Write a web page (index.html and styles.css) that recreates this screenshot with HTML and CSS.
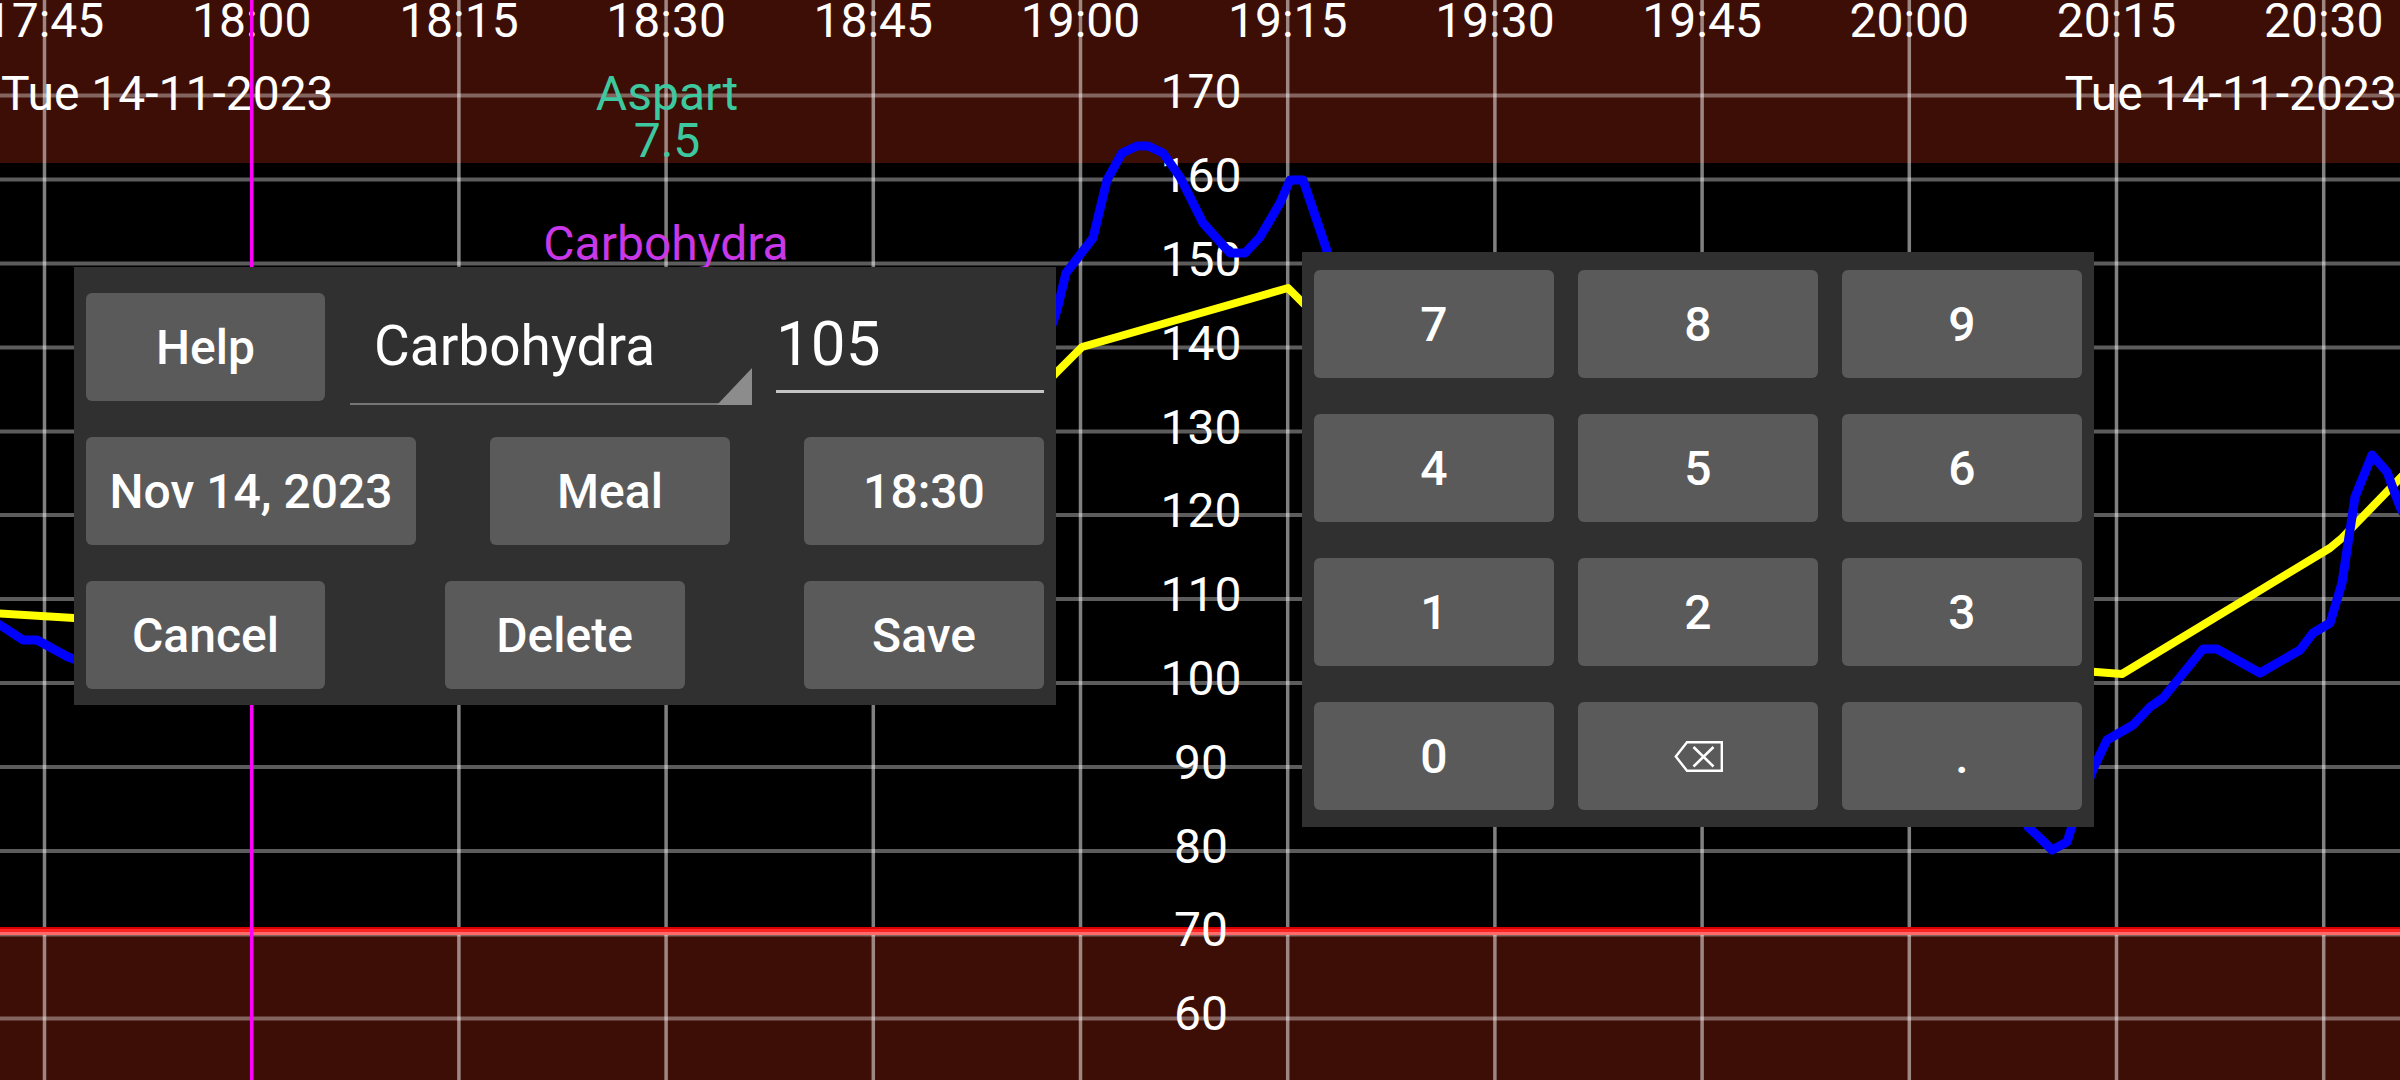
FILE: index.html
```html
<!DOCTYPE html>
<html>
<head>
<meta charset="utf-8">
<title>Glucose chart – entry</title>
<link rel="stylesheet" href="styles.css">
</head>
<body>
<div class="screen">
  <svg class="chart" width="2400" height="1080" viewBox="0 0 2400 1080">
    <rect class="band" x="0" y="0" width="2400" height="163"/>
    <rect class="band" x="0" y="935" width="2400" height="145"/>
    <g class="hgrid">
      <line x1="0" x2="2400" y1="95.5" y2="95.5"/>
      <line x1="0" x2="2400" y1="179.5" y2="179.5"/>
      <line x1="0" x2="2400" y1="263.5" y2="263.5"/>
      <line x1="0" x2="2400" y1="347.5" y2="347.5"/>
      <line x1="0" x2="2400" y1="431.5" y2="431.5"/>
      <line x1="0" x2="2400" y1="515" y2="515"/>
      <line x1="0" x2="2400" y1="599" y2="599"/>
      <line x1="0" x2="2400" y1="683" y2="683"/>
      <line x1="0" x2="2400" y1="767" y2="767"/>
      <line x1="0" x2="2400" y1="851" y2="851"/>
      <line x1="0" x2="2400" y1="934.5" y2="934.5"/>
      <line x1="0" x2="2400" y1="1018.5" y2="1018.5"/>
    </g>
    <g class="vgrid">
      <line x1="44.5" x2="44.5" y1="0" y2="1080"/>
      <line x1="458.9" x2="458.9" y1="0" y2="1080"/>
      <line x1="666.1" x2="666.1" y1="0" y2="1080"/>
      <line x1="873.3" x2="873.3" y1="0" y2="1080"/>
      <line x1="1080.5" x2="1080.5" y1="0" y2="1080"/>
      <line x1="1287.7" x2="1287.7" y1="0" y2="1080"/>
      <line x1="1494.9" x2="1494.9" y1="0" y2="1080"/>
      <line x1="1702.1" x2="1702.1" y1="0" y2="1080"/>
      <line x1="1909.3" x2="1909.3" y1="0" y2="1080"/>
      <line x1="2116.5" x2="2116.5" y1="0" y2="1080"/>
      <line x1="2323.7" x2="2323.7" y1="0" y2="1080"/>
    </g>
    <rect class="low1" x="0" y="927" width="2400" height="2"/>
    <rect class="low2" x="0" y="929" width="2400" height="3"/>
    <rect class="low3" x="0" y="932" width="2400" height="3"/>

    <g class="label time">
      <text x="44.5" y="37">17:45</text>
      <text x="251.7" y="37">18:00</text>
      <text x="458.9" y="37">18:15</text>
      <text x="666.1" y="37">18:30</text>
      <text x="873.3" y="37">18:45</text>
      <text x="1080.5" y="37">19:00</text>
      <text x="1287.7" y="37">19:15</text>
      <text x="1494.9" y="37">19:30</text>
      <text x="1702.1" y="37">19:45</text>
      <text x="1909.3" y="37">20:00</text>
      <text x="2116.5" y="37">20:15</text>
      <text x="2323.7" y="37">20:30</text>
    </g>
    <text class="label date-left" x="1" y="110">Tue 14-11-2023</text>
    <text class="label date-right" x="2397" y="110">Tue 14-11-2023</text>
    <g class="label yaxis">
      <text x="1201" y="108">170</text>
      <text x="1201" y="192">160</text>
      <text x="1201" y="276">150</text>
      <text x="1201" y="360">140</text>
      <text x="1201" y="444">130</text>
      <text x="1201" y="527">120</text>
      <text x="1201" y="611">110</text>
      <text x="1201" y="695">100</text>
      <text x="1201" y="779">90</text>
      <text x="1201" y="863">80</text>
      <text x="1201" y="946">70</text>
      <text x="1201" y="1030">60</text>
    </g>
    <text class="label insulin" x="667" y="110">Aspart</text>
    <text class="label insulin" x="667" y="157">7.5</text>
    <text class="label carb" x="666" y="260">Carbohydra</text>

    <line class="now" x1="251.7" x2="251.7" y1="0" y2="1080"/>

    <polyline class="trend" points="-10,613 74,618 120,622"/>
    <polyline class="trend" points="1030,400 1056,373 1082,347 1288,288 1302,302 1330,330"/>
    <polyline class="trend" points="2070,670 2122,674 2330,548 2342,538 2410,468"/>

    <polyline class="glucose" points="-10,620 0,625 23,640 37,640 68,657 90,665"/>
    <polyline class="glucose" points="1040,360 1057,310 1066,273 1093,238 1107,180 1122,153 1137,146 1148,146 1163,153 1180,177 1203,223 1230,253 1245,253 1260,237 1280,203 1290,180 1303,180 1320,230 1340,290"/>
    <polyline class="glucose" points="2010,780 2028,827 2040,838 2052,850 2067,842 2073,823 2094,767 2107,740 2133,725 2150,707 2163,698 2203,649 2217,649 2260,673 2300,650 2313,633 2330,623 2342,583 2355,497 2372,455 2387,472 2400,507 2410,525"/>
  </svg>

  <div class="dialog entry">
    <div class="row row-top">
      <div class="btn btn-narrow">Help</div>
      <div class="spinner">
        <span class="spinner-text">Carbohydra</span>
        <span class="spinner-arrow"></span>
      </div>
      <div class="edit"><span class="edit-text">105</span></div>
    </div>
    <div class="row">
      <div class="btn btn-wide">Nov 14, 2023</div>
      <div class="btn">Meal</div>
      <div class="btn">18:30</div>
    </div>
    <div class="row">
      <div class="btn btn-narrow">Cancel</div>
      <div class="btn">Delete</div>
      <div class="btn">Save</div>
    </div>
  </div>

  <div class="dialog keypad">
    <div class="key">7</div>
    <div class="key">8</div>
    <div class="key">9</div>
    <div class="key">4</div>
    <div class="key">5</div>
    <div class="key">6</div>
    <div class="key">1</div>
    <div class="key">2</div>
    <div class="key">3</div>
    <div class="key">0</div>
    <div class="key">
      <svg class="backspace" width="49" height="31" viewBox="0 0 49 31">
        <path d="M1.8 15.5 L13 1.2 H47.8 V29.8 H13 Z" fill="none" stroke="#fff" stroke-width="2.4" stroke-linejoin="miter"/>
        <path d="M19.5 6 L39.5 25.5 M39.5 6 L19.5 25.5" fill="none" stroke="#fff" stroke-width="2.6"/>
      </svg>
    </div>
    <div class="key">.</div>
  </div>
</div>
</body>
</html>
```

FILE: styles.css
```css
html, body {
  margin: 0;
  padding: 0;
}

body {
  width: 2400px;
  height: 1080px;
  overflow: hidden;
  background: #000;
  font-family: Roboto, "Liberation Sans", sans-serif;
  color: #fff;
}

.screen {
  position: relative;
  width: 2400px;
  height: 1080px;
}

.chart {
  display: block;
}

.band {
  fill: #3d0e05;
}

.hgrid line {
  stroke: rgba(255, 255, 255, 0.36);
  stroke-width: 4;
}

.vgrid line {
  stroke: rgba(255, 255, 255, 0.5);
  stroke-width: 3.5;
}

.low1 { fill: #d80000; }
.low2 { fill: #ff2424; }
.low3 { fill: #ff6a6a; }

.label {
  font-family: Roboto, "Liberation Sans", sans-serif;
  font-size: 48px;
  fill: #fff;
}

.time text {
  text-anchor: middle;
}

.date-right {
  text-anchor: end;
}

.yaxis text {
  text-anchor: middle;
}

.insulin {
  fill: #3ec8a0;
  text-anchor: middle;
}

.carb {
  fill: #c838e6;
  text-anchor: middle;
}

.now {
  stroke: #ff00ff;
  stroke-width: 3.5;
}

.trend {
  fill: none;
  stroke: #ffff00;
  stroke-width: 8;
  stroke-linejoin: round;
}

.glucose {
  fill: none;
  stroke: #0000ff;
  stroke-width: 9;
  stroke-linejoin: round;
}

/* dialogs */
.dialog {
  position: absolute;
  background: #303030;
  box-sizing: border-box;
}

.entry {
  left: 74px;
  top: 267px;
  width: 982px;
  height: 438px;
  padding: 26px 12px 16px;
  display: flex;
  flex-direction: column;
  gap: 36px;
}

.row {
  display: flex;
  justify-content: space-between;
  height: 108px;
}

.row-top {
  justify-content: flex-start;
  align-items: flex-start;
}

.btn,
.key {
  background: #5a5a5b;
  border-radius: 6px;
  color: #fff;
  font-size: 48px;
  font-weight: 500;
  display: flex;
  align-items: center;
  justify-content: center;
  height: 108px;
  width: 240px;
  box-sizing: border-box;
}

.btn-narrow {
  width: 239px;
}

.btn-wide {
  width: 330px;
}

.spinner {
  position: relative;
  margin-left: 25px;
  width: 402px;
  height: 112px;
  box-sizing: border-box;
  border-bottom: 2px solid #767676;
  display: flex;
  align-items: flex-end;
  padding: 0 0 25px 24px;
}

.spinner-text {
  font-size: 55px;
  line-height: normal;
}

.spinner-arrow {
  position: absolute;
  right: 0;
  bottom: -2px;
  width: 35px;
  height: 37px;
  background: #8c8c8c;
  clip-path: polygon(100% 0, 100% 100%, 0 100%);
}

.edit {
  margin-left: 24px;
  width: 268px;
  height: 100px;
  box-sizing: border-box;
  border-bottom: 3px solid #c4c4c4;
  display: flex;
  align-items: flex-end;
  padding: 0 0 10px 0;
}

.edit-text {
  font-size: 62px;
  line-height: normal;
}

.keypad {
  left: 1302px;
  top: 252px;
  width: 792px;
  height: 575px;
  padding: 18px 12px 17px;
  display: grid;
  grid-template-columns: repeat(3, 240px);
  grid-auto-rows: 108px;
  column-gap: 24px;
  row-gap: 36px;
}

.key {
  font-size: 48px;
}

.backspace {
  display: block;
}
```
